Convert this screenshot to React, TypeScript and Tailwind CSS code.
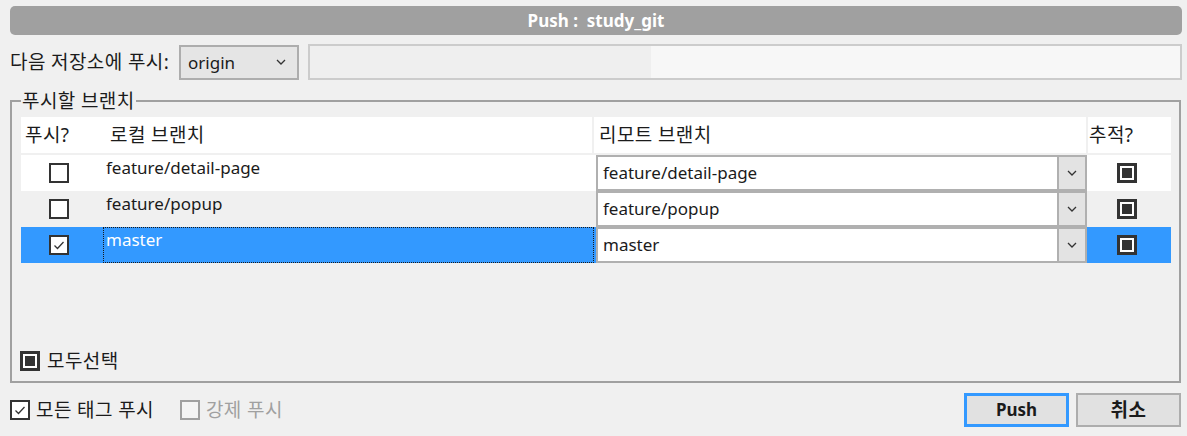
import React from 'react';

type Branch = {
  local: string;
  remote: string;
  push: boolean;
  track: boolean;
};

const BRANCHES: Branch[] = [
  { local: 'feature/detail-page', remote: 'feature/detail-page', push: false, track: true },
  { local: 'feature/popup', remote: 'feature/popup', push: false, track: true },
  { local: 'master', remote: 'master', push: true, track: true },
];

// hangul reads larger than latin in the reference, so it gets its own size
const KO = 'text-[19px] tracking-[0.4px]';

function Chevron() {
  return (
    <svg width="10" height="6" viewBox="0 0 10 6">
      <path d="M1 1l4 4 4-4" stroke="#333" strokeWidth="1.3" fill="none" />
    </svg>
  );
}

function CheckBox({ checked, disabled }: { checked?: boolean; disabled?: boolean }) {
  return (
    <div
      className={
        disabled
          ? 'w-[20px] h-[20px] border-2 border-[#a0a0a0] bg-[#f4f4f4] shrink-0'
          : 'w-[20px] h-[20px] border-2 border-[#333] bg-white flex items-center justify-center shrink-0'
      }
    >
      {checked && (
        <svg width="14" height="14" viewBox="0 0 14 14">
          <path d="M2.5 7.5l3 3 6-6.5" stroke="#333" strokeWidth="1.3" fill="none" />
        </svg>
      )}
    </div>
  );
}

function MixedBox() {
  return (
    <div className="w-[20px] h-[20px] border-[3px] border-[#333] bg-white p-[2px] shrink-0">
      <div className="w-full h-full bg-[#333]" />
    </div>
  );
}

export default function App() {
  return (
    <div className="w-[1187px] h-[436px] bg-[#f0f0f0] pt-[6px] text-[17px] text-[#1b1b1b] font-[family-name:'Noto_Sans','Noto_Sans_CJK_KR',sans-serif] overflow-hidden">
      <div className="mx-[10px] w-[1172px] h-[29px] rounded-[5px] bg-[#a0a0a0] flex items-center justify-center text-white font-bold">
        Push :&nbsp;&nbsp;study_git
      </div>

      <div className="mt-[9px] h-[36px] flex items-center pl-[10px]">
        <span className={`${KO} w-[160px] whitespace-nowrap`}>다음 저장소에 푸시:</span>
        <div className="ml-[9px] w-[120px] h-[35px] border-2 border-[#adadad] bg-[#e5e5e5] flex items-center justify-between pl-[7px] pr-[11px]">
          <span className="pt-[2px]">origin</span>
          <Chevron />
        </div>
        <div className="ml-[9px] w-[874px] h-[36px] border-2 border-[#cccccc] bg-[#f7f7f7]">
          <div className="w-[341px] h-full bg-[#efefef]" />
        </div>
      </div>

      <fieldset className="mt-[8px] ml-[10px] w-[1171px] h-[295px] border-2 border-[#a0a0a0] pl-[9px] pr-[8px] pb-[7px] flex flex-col">
        <legend className={`${KO} px-[1px] leading-[26px]`}>푸시할 브랜치</legend>

        <div className="mt-[3px] grid grid-cols-[82px_491px_494px_83px]">
          <div className={`${KO} h-[36px] bg-white flex items-center pl-[4px]`}>푸시?</div>
          <div className={`${KO} h-[36px] bg-white flex items-center pl-[7px] border-r-2 border-[#f0f0f0]`}>
            로컬 브랜치
          </div>
          <div className={`${KO} h-[36px] bg-white flex items-center pl-[5px] border-r-2 border-[#f0f0f0]`}>
            리모트 브랜치
          </div>
          <div className={`${KO} h-[36px] bg-white flex items-center pl-[1px]`}>추적?</div>
          <div className="col-span-4 h-[2px]" />

          {BRANCHES.map((b, i) => {
            const selected = b.push;
            const rowBg = selected ? 'bg-[#3399ff]' : i % 2 === 0 ? 'bg-white' : 'bg-[#f0f0f0]';
            return (
              <React.Fragment key={b.local}>
                <div className={`h-[36px] ${rowBg} flex items-center pl-[28px]`}>
                  <CheckBox checked={b.push} />
                </div>
                <div className={`h-[36px] ${rowBg}`}>
                  <div
                    className={
                      selected
                        ? 'h-full border border-dotted border-[#1a1a1a] pl-[2px] leading-[20px] pt-[2px] text-white'
                        : 'h-full pl-[3px] pt-[3px] leading-[20px]'
                    }
                  >
                    {b.local}
                  </div>
                </div>
                <div className={`h-[36px] ${rowBg} pl-[2px]`}>
                  <div className="w-[491px] h-[36px] border-2 border-[#b0b0b0] bg-white flex">
                    <div className="flex-1 flex items-center pl-[5px]">{b.remote}</div>
                    <div className="w-[28px] border-l-2 border-[#b0b0b0] bg-[#e3e3e3] flex items-center justify-center">
                      <Chevron />
                    </div>
                  </div>
                </div>
                <div className={`h-[36px] ${rowBg} flex items-center pl-[29px]`}>
                  {b.track && <MixedBox />}
                </div>
              </React.Fragment>
            );
          })}
        </div>

        <div className="flex-1" />
        <div className="flex items-center gap-[7px] -ml-[1px] h-[26px]">
          <MixedBox />
          <span className={KO}>모두선택</span>
        </div>
      </fieldset>

      <div className="mt-[10px] flex items-center pl-[10px] pr-[6px]">
        <div className="flex items-center gap-[6px]">
          <CheckBox checked />
          <span className={KO}>모든 태그 푸시</span>
        </div>
        <div className="ml-[26px] flex items-center gap-[6px] text-[#a0a0a0]">
          <CheckBox disabled />
          <span className={KO}>강제 푸시</span>
        </div>
        <div className="flex-1" />
        <button className="w-[105px] h-[34px] border-[3px] border-[#3399ff] bg-[#e1e1e1] font-bold">
          Push
        </button>
        <button className={`${KO} ml-[7px] w-[105px] h-[34px] border-2 border-[#adadad] bg-[#e1e1e1] font-bold`}>
          취소
        </button>
      </div>
    </div>
  );
}
